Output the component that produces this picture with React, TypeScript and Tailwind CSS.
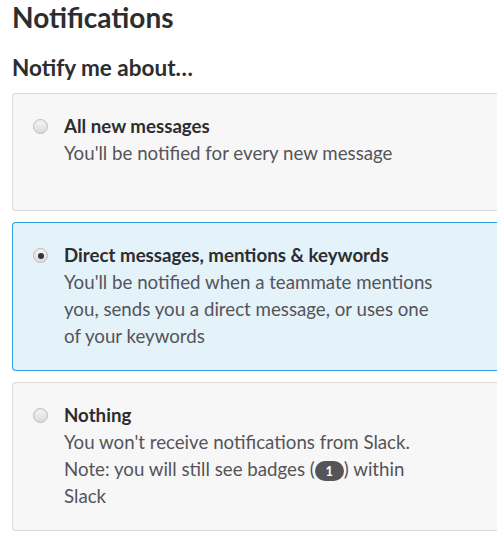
const options = [
  {
    id: "all",
    title: "All new messages",
    body: <>You'll be notified for every new message</>,
  },
  {
    id: "mentions",
    title: "Direct messages, mentions & keywords",
    body: (
      <>
        You'll be notified when a teammate mentions you, sends you a direct message, or uses one
        of your keywords
      </>
    ),
  },
  {
    id: "nothing",
    title: "Nothing",
    body: (
      <>
        You won't receive notifications from Slack. Note: you will still see badges (
        <span className="inline-block h-[20px] w-[29px] rounded-full bg-[#555459] text-center align-middle text-[13px] font-bold leading-[20px] text-white">
          1
        </span>
        ) within Slack
      </>
    ),
  },
]

function Radio({ checked }: { checked: boolean }) {
  return (
    <span className="mt-[6px] flex size-[15px] shrink-0 items-center justify-center rounded-full border border-[#bdbdbd] bg-[linear-gradient(#f6f6f6,#dadada)] shadow-[inset_0_1px_1px_rgba(0,0,0,0.06)]">
      {checked && <span className="size-[6px] rounded-full bg-[#333]" />}
    </span>
  )
}

export default function App() {
  const selected = "mentions"

  return (
    <div className="h-[538px] w-[497px] overflow-hidden bg-white pl-3 font-['Lato',sans-serif] text-[#2c2d30]">
      <h1 className="text-[28px] font-bold leading-[34px]">Notifications</h1>
      <h2 className="mt-[19px] text-[22.5px] font-bold leading-[30px]">Notify me about…</h2>
      <div className="mt-[10px] flex w-[500px] flex-col gap-[11px]">
        {options.map((opt) => {
          const active = opt.id === selected
          return (
            <label
              key={opt.id}
              className={
                "flex min-h-[118px] rounded-l-[4px] border border-r-0 " +
                (active ? "border-[#2d9ee0] bg-[#e4f2f9]" : "border-[#dcdcdc] bg-[#f7f7f7]")
              }
            >
              <div className="flex flex-1 gap-[16px] pb-[20px] pl-[20px] pr-[10px] pt-[19px]">
                <Radio checked={active} />
                <div className="w-[382px] text-[18.7px] leading-[27px]">
                  <div className="font-bold text-[#2c2d30]">{opt.title}</div>
                  <div className="text-[#555459]">{opt.body}</div>
                </div>
              </div>
              <div className="w-[9px] shrink-0 bg-white" />
            </label>
          )
        })}
      </div>
    </div>
  )
}
